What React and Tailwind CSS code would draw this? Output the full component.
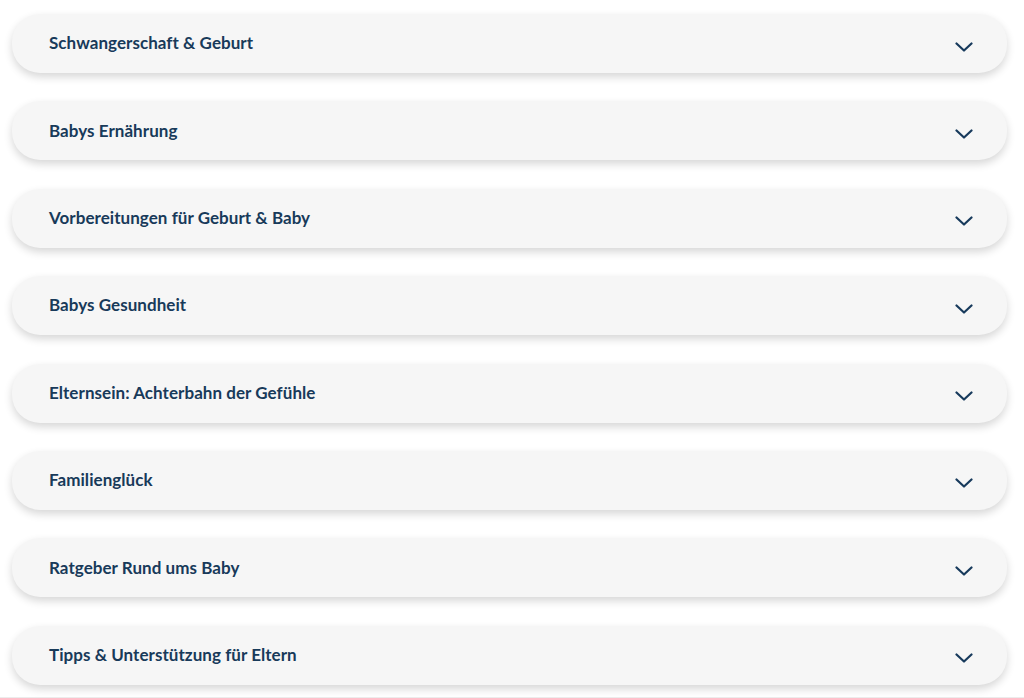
const items = [
  'Schwangerschaft & Geburt',
  'Babys Ernährung',
  'Vorbereitungen für Geburt & Baby',
  'Babys Gesundheit',
  'Elternsein: Achterbahn der Gefühle',
  'Familienglück',
  'Ratgeber Rund ums Baby',
  'Tipps & Unterstützung für Eltern',
];

function Chevron() {
  return (
    <svg width="18" height="10" viewBox="0 0 18 10" fill="none" className="shrink-0 mt-[6px]">
      <path d="M1.5 1.5 L9 8.5 L16.5 1.5" stroke="#173a5c" strokeWidth="2.2" strokeLinecap="round" strokeLinejoin="round" />
    </svg>
  );
}

export default function App() {
  return (
    <div className="w-[1024px] h-[698px] bg-white overflow-hidden font-['Lato','Open_Sans',sans-serif]">
      <div className="flex flex-col gap-[28.4px] pt-[14px] pl-[12px] pr-[17px] pb-[12px] border-b border-[#ececec]">
        {items.map((label) => (
          <div
            key={label}
            className="h-[59px] flex items-center justify-between pl-[37px] pr-[34px] rounded-[28px] bg-[#f6f6f6] shadow-[0_4px_8px_rgba(0,0,0,0.16)]"
          >
            <span className="text-[17px] font-bold text-[#183a5a] tracking-[0.05px] -mt-[1px]">{label}</span>
            <Chevron />
          </div>
        ))}
      </div>
    </div>
  );
}
